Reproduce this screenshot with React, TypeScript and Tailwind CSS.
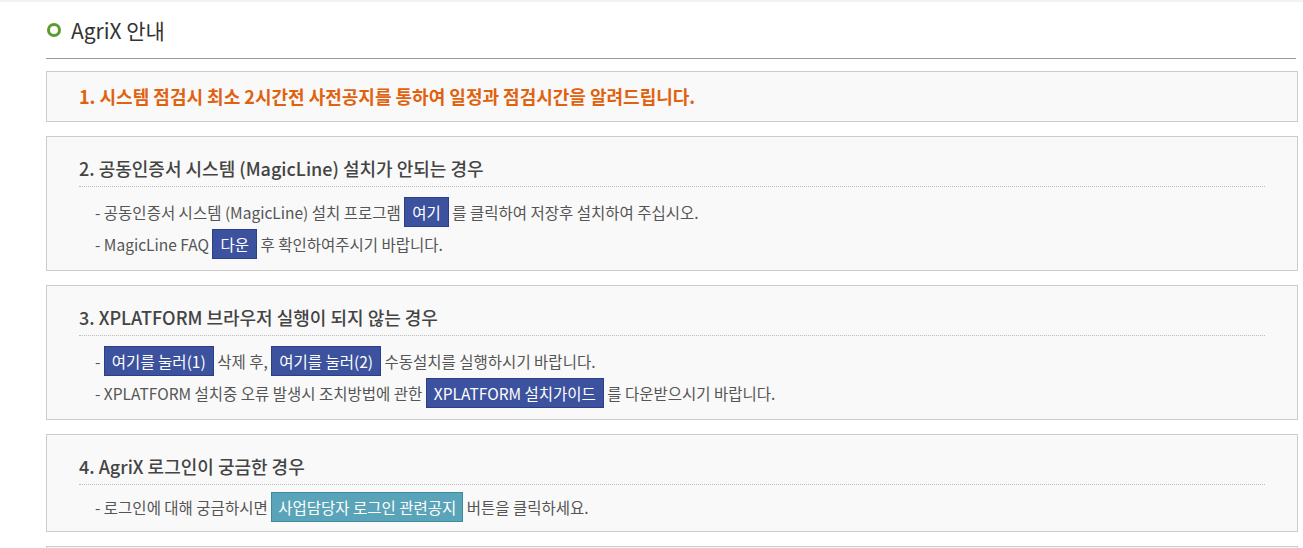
const font = { fontFamily: '"Noto Sans CJK KR", "Noto Sans", sans-serif' }

function BlueBtn({ children }: { children: React.ReactNode }) {
  return (
    <span className="inline-block align-top mt-[1px] px-[7px] leading-[28px] border border-[#2b3f88] bg-[#3c529e] text-white text-[15.5px]">
      {children}
    </span>
  )
}

function TealBtn({ children }: { children: React.ReactNode }) {
  return (
    <span className="inline-block align-top px-[6px] leading-[28px] border border-[#3d8aa1] bg-[#5aa4b9] text-white text-[15.5px]">
      {children}
    </span>
  )
}

function Row({ h = 32, children }: { h?: number; children: React.ReactNode }) {
  return (
    <div className={h === 32 ? 'h-[32px] leading-[32px]' : 'h-[30px] leading-[30px]'}>
      {children}
    </div>
  )
}

function Section({
  title,
  compact,
  children,
}: {
  title: string
  compact?: boolean
  children: React.ReactNode
}) {
  return (
    <div
      className={
        'border border-[#cccccc] bg-[#f9f9f9] px-[32px] pt-[19px] ' + (compact ? 'pb-[9px]' : 'pb-[10px]')
      }
    >
      <div className="h-[24px] leading-[24px] text-[18px] font-medium text-[#444]">{title}</div>
      <div className="mt-[6px] border-b border-dotted border-[#bcbcbc]" />
      <div className={'pl-[16px] text-[15.5px] text-[#555] ' + (compact ? 'mt-[7px]' : 'mt-[9px]')}>
        {children}
      </div>
    </div>
  )
}

export default function App() {
  return (
    <div className="min-h-screen bg-white" style={font}>
      <div className="h-[2px] bg-[#eef3f8]" />
      <div className="pl-[46px] pr-[5px]">
        <div className="mt-[16px] h-[24px] flex items-center gap-[10px]">
          <span className="ml-[1px] w-[14px] h-[14px] rounded-full border-[3px] border-[#5a9c2d]" />
          <h1 className="text-[21px] text-[#333] leading-[24px]">AgriX 안내</h1>
        </div>
        <div className="mt-[16px] mr-[2px] h-px bg-[#999]" />

        <div className="mt-[12px] flex flex-col gap-[14px]">
          <div className="h-[51px] border border-[#cccccc] bg-[#f9f9f9] px-[32px] flex items-center">
            <p className="text-[18px] font-bold text-[#e0620f]">
              1. 시스템 점검시 최소 2시간전 사전공지를 통하여 일정과 점검시간을 알려드립니다.
            </p>
          </div>

          <Section title="2. 공동인증서 시스템 (MagicLine) 설치가 안되는 경우">
            <Row>
              - 공동인증서 시스템 (MagicLine) 설치 프로그램 <BlueBtn>여기</BlueBtn> 를 클릭하여 저장후 설치하여 주십시오.
            </Row>
            <Row>
              - MagicLine FAQ <BlueBtn>다운</BlueBtn> 후 확인하여주시기 바랍니다.
            </Row>
          </Section>

          <Section title="3. XPLATFORM 브라우저 실행이 되지 않는 경우">
            <Row>
              - <BlueBtn>여기를 눌러(1)</BlueBtn> 삭제 후, <BlueBtn>여기를 눌러(2)</BlueBtn> 수동설치를 실행하시기 바랍니다.
            </Row>
            <Row>
              - XPLATFORM 설치중 오류 발생시 조치방법에 관한 <BlueBtn>XPLATFORM 설치가이드</BlueBtn> 를 다운받으시기 바랍니다.
            </Row>
          </Section>

          <Section title="4. AgriX 로그인이 궁금한 경우" compact>
            <Row h={30}>
              - 로그인에 대해 궁금하시면 <TealBtn>사업담당자 로그인 관련공지</TealBtn> 버튼을 클릭하세요.
            </Row>
          </Section>

          <div className="h-[40px] border border-[#cccccc] bg-[#f9f9f9]" />
        </div>
      </div>
    </div>
  )
}
